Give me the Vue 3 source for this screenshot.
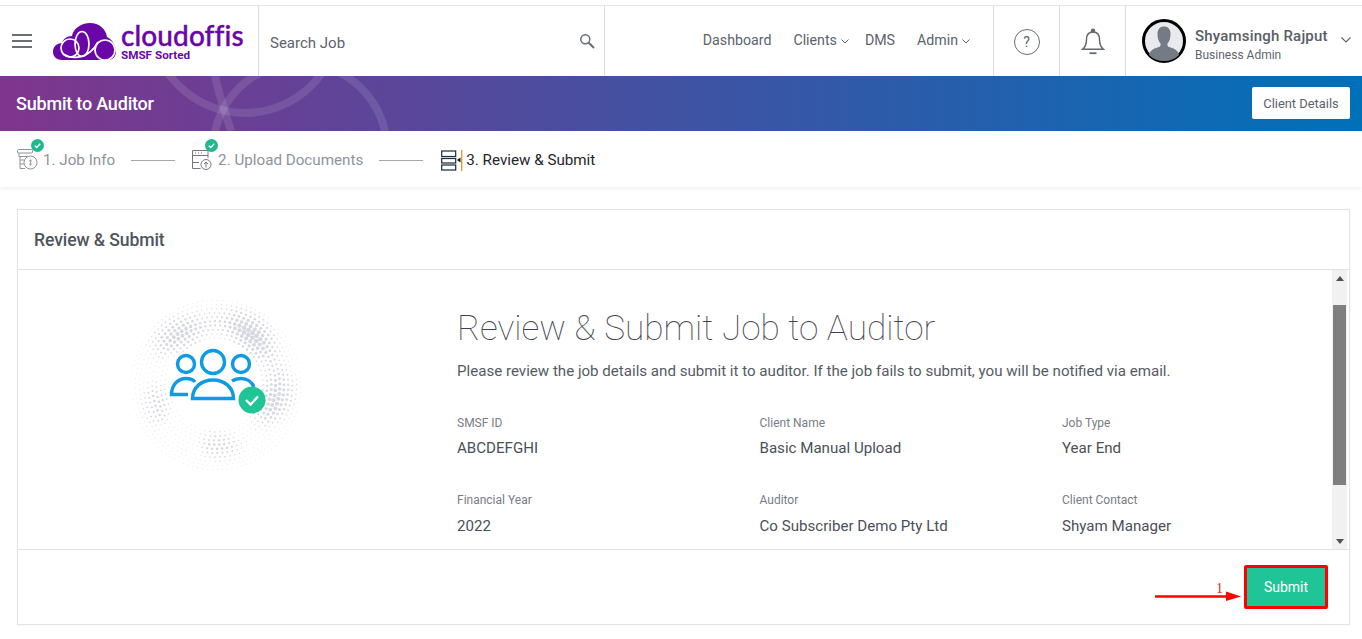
<script setup>
import { computed } from 'vue'

const details = [
  { label: 'SMSF ID', value: 'ABCDEFGHI' },
  { label: 'Client Name', value: 'Basic Manual Upload' },
  { label: 'Job Type', value: 'Year End' },
  { label: 'Financial Year', value: '2022' },
  { label: 'Auditor', value: 'Co Subscriber Demo Pty Ltd' },
  { label: 'Client Contact', value: 'Shyam Manager' }
]

const dots = computed(() => {
  const out = []
  for (let i = 0; i < 10; i++) {
    const r = 47 + i * 4.2
    const count = Math.round((Math.PI * 2 * r) / 5)
    for (let k = 0; k < count; k++) {
      const a = (k / count) * Math.PI * 2 + i * 0.31
      const wave = 0.5 + 0.5 * Math.sin(a * 2 + 0.4) * Math.cos(a * 3 - 0.6 + i * 0.1)
      const fade = Math.max(0, 1 - Math.abs(i - 3.5) / 7)
      out.push({
        id: i + '-' + k,
        x: +(84 + Math.cos(a) * r).toFixed(2),
        y: +(85 + Math.sin(a) * r).toFixed(2),
        r: +Math.max(0.45, 2.6 * wave * fade).toFixed(2)
      })
    }
  }
  return out
})
</script>

<template>
  <div class="page">
    <header class="topbar">
      <button class="burger" aria-label="Menu"><i></i><i></i><i></i></button>
      <div class="brand">
        <svg class="cloud" viewBox="0 0 63 37" width="63" height="37">
          <path d="M9 37C3 37 0 33 0 29C0 23.500 4 20 9 20C10 16 14 13 19 13C20 6 28 0 37 0C46 0 53 6 54 14C60 17 63 23 63 29C63 34 59 37 55 37Z" fill="#6a06a8"/>
          <g fill="none" stroke="#fff" stroke-width="1.700">
            <circle cx="17" cy="25" r="9"/>
            <ellipse cx="29" cy="21" rx="7" ry="12.500"/>
            <circle cx="52" cy="27" r="10"/>
            <path d="M10 31C20 37 36 36 45 19"/>
          </g>
        </svg>
        <div class="brand-text">
          <span class="brand-name">cloudoffis</span>
          <span class="brand-sub">SMSF Sorted</span>
        </div>
      </div>
      <div class="search">
        <span>Search Job</span>
        <svg viewBox="0 0 16 16" width="16" height="16" fill="none" stroke="#666d75" stroke-width="1.500">
          <circle cx="6.300" cy="6.300" r="4.500"/>
          <path d="M9.700 9.700L15 15" stroke-width="2"/>
        </svg>
      </div>
      <nav class="nav">
        <a>Dashboard</a>
        <a class="has-caret">Clients<svg viewBox="0 0 8 5" width="8" height="5"><path d="M.5.5L4 4L7.500.5" fill="none" stroke="#5c6670"/></svg></a>
        <a>DMS</a>
        <a class="has-caret">Admin<svg viewBox="0 0 8 5" width="8" height="5"><path d="M.5.5L4 4L7.500.5" fill="none" stroke="#5c6670"/></svg></a>
      </nav>
      <div class="cell">
        <span class="help">?</span>
      </div>
      <div class="cell">
        <svg viewBox="0 0 24 28" width="24" height="28" fill="none" stroke="#66696e" stroke-width="1.500">
          <circle cx="12" cy="2.800" r="1.500" fill="#66696e"/>
          <path d="M12 4C7.500 4 5.500 7.500 5.500 11.500C5.500 16 4.500 19 1.500 21.300H22.500C19.500 19 18.500 16 18.500 11.500C18.500 7.500 16.500 4 12 4Z"/>
          <path d="M8.500 25.200H15.500" stroke-width="1.800"/>
        </svg>
      </div>
      <div class="user">
        <svg class="avatar" viewBox="0 0 44 44" width="44" height="44">
          <circle cx="22" cy="22" r="20.500" fill="#e9eaee" stroke="#000" stroke-width="3"/>
          <path d="M7 36C8 31 12 29.500 17 28C18.500 27.400 18.800 26 18.500 24.500C16.500 22.500 15.500 19 15.500 15C15.500 10 18 7.500 22 7.500C26 7.500 28.500 10 28.500 15C28.500 19 27.500 22.500 25.500 24.500C25.200 26 25.500 27.400 27 28C32 29.500 36 31 37 36C33 40 28 42 22 42C16 42 11 40 7 36Z" fill="#757b84"/>
        </svg>
        <div class="user-text">
          <strong>Shyamsingh Rajput</strong>
          <span>Business Admin</span>
        </div>
        <svg class="user-caret" viewBox="0 0 10 6" width="10" height="6"><path d="M.5.5L5 5L9.500.5" fill="none" stroke="#5c6670" stroke-width="1.100"/></svg>
      </div>
    </header>

    <section class="band">
      <svg class="band-art" viewBox="0 0 260 55" width="260" height="55" fill="none" stroke="#fff" stroke-opacity=".11" stroke-width="8">
        <circle cx="105" cy="-57" r="94"/>
        <circle cx="160" cy="74" r="87"/>
        <path d="M75 0C79 19 85 36 91 55"/>
      </svg>
      <h1>Submit to Auditor</h1>
      <button class="client-btn">Client Details</button>
    </section>

    <div class="steps">
      <div class="step done">
        <span class="step-icon">
          <svg viewBox="0 0 22 22" width="22" height="22" fill="none" stroke="#8f9298" stroke-width="1">
            <rect x=".5" y=".5" width="15" height="3.500" rx="1"/>
            <path d="M2 4V7.500M2 7.500H10M3 7.500V19.500H8M3 11H7M3 15H7"/>
            <circle cx="13.500" cy="13.500" r="6.500" fill="#fff"/>
            <path d="M13.500 10.500V16.500M12 11.800H15M12 15.200H15" stroke-width=".8"/>
          </svg>
          <span class="tick"><svg viewBox="0 0 10 10" width="9" height="9"><path d="M2 5.200L4.200 7.200L8 3" fill="none" stroke="#fff" stroke-width="1.500"/></svg></span>
        </span>
        <span>1. Job Info</span>
      </div>
      <span class="step-line"></span>
      <div class="step done">
        <span class="step-icon">
          <svg viewBox="0 0 22 22" width="22" height="22" fill="none" stroke="#7b7480" stroke-width="1">
            <path d="M9.500 19.500H1.500V1.500H17V9"/>
            <path d="M1.500 6.500H17M1.500 13.500H8"/>
            <path d="M4 4H5M7 4H8M10 4H11"/>
            <circle cx="15" cy="15.500" r="5"/>
            <path d="M15 18.500V13M13 15L15 13L17 15"/>
          </svg>
          <span class="tick"><svg viewBox="0 0 10 10" width="9" height="9"><path d="M2 5.200L4.200 7.200L8 3" fill="none" stroke="#fff" stroke-width="1.500"/></svg></span>
        </span>
        <span>2. Upload Documents</span>
      </div>
      <span class="step-line"></span>
      <div class="step active">
        <svg viewBox="0 0 22 21" width="22" height="21" fill="none" stroke="#17293a" stroke-width="1.200">
          <rect x=".7" y="1" width="14" height="5.500"/>
          <rect x=".7" y="8.500" width="14" height="4.500"/>
          <rect x=".7" y="15" width="14" height="5"/>
          <path d="M20.700 0V21" stroke="#d99a2b" stroke-width="1.300"/>
          <path d="M19.500 7.500V12.500L16 10Z" fill="#111" stroke="none"/>
        </svg>
        <span>3. Review &amp; Submit</span>
      </div>
    </div>

    <main class="content">
      <article class="card">
        <div class="card-head">Review &amp; Submit</div>
        <div class="card-body">
          <div class="scroll-area">
            <div class="graphic">
              <svg viewBox="0 0 170 170" width="170" height="170">
                <circle v-for="d in dots" :key="d.id" :cx="d.x" :cy="d.y" :r="d.r" fill="#d7d8e0"/>
                <g fill="none" stroke="#0f9ae4" stroke-width="3.400">
                  <circle cx="81" cy="62" r="11.500"/>
                  <circle cx="54" cy="64" r="8.500"/>
                  <circle cx="109" cy="64" r="8.500"/>
                  <path d="M56 94.500H39.500C39.500 85 46 78.500 54 78.500C58 78.500 61 79.500 63 82"/>
                  <path d="M100 81C103 79 106 78.500 109 78.500C115 78.500 120 82 122 87"/>
                  <path d="M60.500 98.500C60.500 87.500 69.500 80 81 80C92.500 80 101.500 87.500 101.500 98.500Z"/>
                </g>
                <circle cx="120" cy="100" r="13.500" fill="#1fc597"/>
                <path d="M114 100L118.500 104.500L126 96.500" fill="none" stroke="#fff" stroke-width="2.300"/>
              </svg>
            </div>
            <div class="review">
              <h2>Review &amp; Submit Job to Auditor</h2>
              <p>Please review the job details and submit it to auditor. If the job fails to submit, you will be notified via email.</p>
              <dl class="grid">
                <div v-for="d in details" :key="d.label" class="field">
                  <dt>{{ d.label }}</dt>
                  <dd>{{ d.value }}</dd>
                </div>
              </dl>
            </div>
          </div>
          <div class="scrollbar">
            <span class="arrow up"></span>
            <span class="track"><span class="thumb"></span></span>
            <span class="arrow down"></span>
          </div>
        </div>
        <div class="card-foot">
          <div class="callout">
            <span class="num">1</span>
            <svg viewBox="0 0 89 12" width="89" height="12">
              <path d="M0 6.500H74" stroke="#f00" stroke-width="2.500"/>
              <path d="M71 1.500L86 6.500L71 11Z" fill="#f00"/>
            </svg>
          </div>
          <button class="submit">Submit</button>
        </div>
      </article>
    </main>
  </div>
</template>

<style>
html, body { margin: 0; background: #fff; }
</style>

<style scoped>
.page {
  width: 1362px;
  height: 639px;
  overflow: hidden;
  background: #fff;
  padding-top: 5px;
  box-sizing: border-box;
  font-family: Roboto, "Liberation Sans", sans-serif;
  color: #4b5159;
}
.topbar {
  display: flex;
  height: 71px;
  box-sizing: border-box;
  border-top: 1px solid #e4e4e4;
  align-items: stretch;
}
.burger {
  width: 53px;
  flex: none;
  background: none;
  border: 0;
  padding: 0 0 0 12px;
  display: flex;
  flex-direction: column;
  justify-content: center;
  gap: 4px;
  box-sizing: border-box;
}
.burger i { display: block; width: 20px; height: 2px; background: #6b6f73; }
.brand {
  width: 205px;
  flex: none;
  display: flex;
  align-items: flex-start;
  gap: 5px;
  padding-top: 17px;
  box-sizing: border-box;
}
.cloud { flex: none; }
.brand-text { display: flex; flex-direction: column; margin-top: -2px; }
.brand-name {
  font-family: Lato, sans-serif;
  font-size: 28px;
  line-height: 28px;
  font-weight: 500;
  color: #6a06a8;
  letter-spacing: .1px;
  -webkit-text-stroke: .4px #6a06a8;
}
.brand-sub {
  font-family: Roboto, sans-serif;
  font-size: 11.700px;
  line-height: 13px;
  font-weight: 700;
  color: #6a06a8;
}
.search {
  width: 347px;
  flex: none;
  box-sizing: border-box;
  border-left: 1px solid #dedede;
  border-right: 1px solid #dedede;
  padding: 4px 9px 0 11px;
  display: flex;
  align-items: center;
  justify-content: space-between;
  font-size: 15px;
  color: #5c636b;
}
.search svg { margin-top: -4px; }
.nav {
  flex: 1;
  display: flex;
  justify-content: flex-end;
  align-items: center;
  gap: 22px;
  padding: 0 23px 3px 0;
  font-size: 14.200px;
  color: #5b636b;
}
.nav a { display: inline-flex; align-items: center; }
.nav .has-caret { gap: 4px; margin-right: -6px; }
.nav .has-caret:last-child { margin-right: 0; }
.nav .has-caret svg { margin-top: 3px; }
.cell {
  width: 66px;
  flex: none;
  box-sizing: border-box;
  border-left: 1px solid #dedede;
  padding-top: 2px;
  display: flex;
  align-items: center;
  justify-content: center;
}
.help {
  width: 26px;
  height: 26px;
  box-sizing: border-box;
  border: 1.500px solid #696d73;
  border-radius: 50%;
  display: flex;
  align-items: center;
  justify-content: center;
  font-size: 14px;
  color: #5d6269;
}
.user {
  flex: none;
  width: 237px;
  box-sizing: border-box;
  border-left: 1px solid #dedede;
  display: flex;
  align-items: center;
  padding-left: 16px;
}
.user-text { display: flex; flex-direction: column; margin-left: 9px; margin-top: 10px; }
.user-text strong { font-size: 15px; line-height: 18px; font-weight: 500; color: #585d66; letter-spacing: .2px; }
.user-text span { font-size: 12px; line-height: 20px; color: #5f6470; }
.user-caret { margin-left: 13px; margin-top: -2px; }

.band {
  height: 55px;
  position: relative;
  display: flex;
  align-items: center;
  justify-content: space-between;
  padding: 0 12px 0 16px;
  background: linear-gradient(90deg, #80358d 0%, #0070b9 100%);
  overflow: hidden;
}
.band-art { position: absolute; left: 140px; top: 0; }
.band h1 {
  position: relative;
  margin: 0 0 1px;
  font-size: 18px;
  font-weight: 500;
  color: #fff;
  letter-spacing: -.2px;
}
.client-btn {
  background: #fff;
  border: 0;
  border-radius: 2px;
  width: 98px;
  height: 32px;
  padding: 1px 0 0;
  font: 400 12.900px Roboto, sans-serif;
  color: #5c626b;
  margin-bottom: 1px;
}

.steps {
  height: 56px;
  box-sizing: border-box;
  display: flex;
  align-items: center;
  padding: 2px 0 0 17px;
  font-size: 15.200px;
  box-shadow: 0 2px 4px rgba(0, 0, 0, .06);
  position: relative;
}
.step { display: flex; align-items: center; gap: 5px; white-space: nowrap; }
.step:first-child { gap: 4px; }
.step.done { color: #8d939c; }
.step.active { color: #23262b; gap: 3px; margin-left: 2px; }
.step-icon { position: relative; display: block; width: 22px; height: 22px; }
.tick {
  position: absolute;
  top: -10px;
  right: -5px;
  width: 13px;
  height: 13px;
  background: #1fb98f;
  border-radius: 50%;
  display: flex;
  align-items: center;
  justify-content: center;
}
.step-line { width: 44px; height: 1px; background: #a5a6ae; margin: 0 16px; }

.content { padding: 22px 12px 0 17px; }
.card {
  height: 416px;
  box-sizing: border-box;
  border: 1px solid #e3e3e3;
  display: flex;
  flex-direction: column;
  box-shadow: 0 0 2px rgba(0, 0, 0, .04);
}
.card-head {
  height: 60px;
  flex: none;
  box-sizing: border-box;
  border-bottom: 1px solid #e2e2e2;
  padding: 0 0 0 16px;
  display: flex;
  align-items: center;
  font-size: 17.600px;
  font-weight: 500;
  color: #4e555d;
  letter-spacing: -.1px;
}
.card-body { height: 279px; flex: none; display: flex; overflow: hidden; }
.scroll-area { flex: 1; display: flex; overflow: hidden; }
.graphic { width: 439px; flex: none; padding: 30px 0 0 114px; box-sizing: border-box; }
.review { flex: 1; padding-top: 38px; }
.review h2 {
  margin: 0;
  font-size: 35.200px;
  line-height: 40px;
  font-weight: 100;
  color: #3f444c;
}
.review p { margin: 11px 0 0; font-size: 15.100px; line-height: 24px; color: #555b63; }
.grid {
  margin: 32px 0 0;
  display: grid;
  grid-template-columns: repeat(3, 302.500px);
  row-gap: 33px;
}
.field dt { font-size: 12px; line-height: 16px; color: #777d85; }
.field dd { margin: 7px 0 0; font-size: 15.100px; line-height: 21px; color: #4a5058; }
.field:nth-child(n+4) dd { margin-top: 8px; }
.scrollbar {
  width: 15px;
  flex: none;
  margin-right: 2px;
  background: #f1f1f1;
  display: flex;
  flex-direction: column;
}
.track { flex: 1; padding-top: 19px; display: block; }
.thumb { display: block; height: 180px; background: #7f7f7f; margin: 0 1px; }
.arrow { height: 16px; flex: none; position: relative; }
.arrow::after {
  content: "";
  position: absolute;
  left: 3.500px;
  border-left: 4px solid transparent;
  border-right: 4px solid transparent;
}
.arrow.up::after { top: 6px; border-bottom: 5px solid #505050; }
.arrow.down::after { top: 6px; border-top: 5px solid #505050; }
.card-foot {
  flex: 1;
  border-top: 1px solid #e2e2e2;
  display: flex;
  justify-content: flex-end;
  padding: 15px 21px 0 0;
}
.callout { position: relative; margin-top: 25px; height: 12px; }
.callout svg { display: block; }
.num {
  position: absolute;
  left: 61px;
  top: -9px;
  font: 14px "Liberation Serif", serif;
  color: #c9302c;
}
.submit {
  width: 84px;
  height: 44px;
  box-sizing: border-box;
  background: #1fc597;
  border: 3px solid #f00;
  border-radius: 2px;
  color: #fff;
  font: 400 14px Roboto, sans-serif;
  padding: 0;
}
</style>
